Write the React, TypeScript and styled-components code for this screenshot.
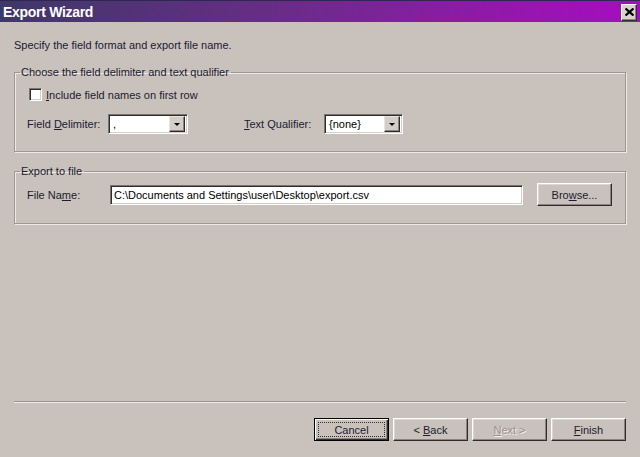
import React from "react";
import styled, { createGlobalStyle, css } from "styled-components";

const Global = createGlobalStyle`
  html, body { margin: 0; padding: 0; background: #c9c1bc; }
  body { font-family: "Liberation Sans", Arial, sans-serif; font-size: 11px; color: #201c30; }
  * { box-sizing: border-box; }
`;

const Window = styled.div`
  width: 640px;
  height: 457px;
  display: flex;
  flex-direction: column;
  background: #c9c1bc;
  overflow: hidden;
`;

const TitleBar = styled.div`
  height: 22px;
  flex: none;
  display: flex;
  align-items: center;
  justify-content: space-between;
  padding: 0 3px 0 3px;
  background: linear-gradient(to right, #3e3868 0%, #6a2c88 45%, #8e1aa8 75%, #a80cc2 100%);
  border-top: 1px solid #2e2850;
`;

const Title = styled.span`
  color: #ffffff;
  font-weight: bold;
  font-size: 14px;
  letter-spacing: -0.3px;
`;

const CloseButton = styled.div`
  width: 16px;
  height: 17px;
  margin-top: 1px;
  background: #d8d2ce;
  border: 1px solid;
  border-color: #ffffff #303030 #303030 #ffffff;
  box-shadow: inset -1px -1px 0 #8a847f;
  display: flex;
  align-items: center;
  justify-content: center;
`;

const Content = styled.div`
  flex: 1;
  display: flex;
  flex-direction: column;
  padding: 0 14px;
`;

const Intro = styled.div`
  margin-top: 16px;
  line-height: 14px;
`;

const Group = styled.fieldset<{ $top: number; $height: number }>`
  margin: ${(p) => p.$top}px 0 0 0;
  height: ${(p) => p.$height}px;
  padding: 0 13px 0 12px;
  border: 1px solid #9e9691;
  box-shadow: inset 1px 1px 0 #eee9e6, 1px 1px 0 #eee9e6;
  min-width: 0;
`;

const Legend = styled.legend`
  padding: 0 2px 0 1px;
  margin-left: -7px;
  line-height: 14px;
`;

const CheckRow = styled.label`
  display: flex;
  align-items: center;
  gap: 4px;
  margin-top: 9px;
  margin-left: 2px;
  height: 13px;
`;

const sunken = css`
  background: #ffffff;
  border: 1px solid;
  border-color: #7a7470 #ffffff #ffffff #7a7470;
  box-shadow: inset 1px 1px 0 #302c2a, inset -1px -1px 0 #d4ceca;
`;

const CheckBox = styled.span`
  ${sunken};
  width: 13px;
  height: 13px;
`;

const Row = styled.div<{ $top: number }>`
  display: flex;
  align-items: center;
  margin-top: ${(p) => p.$top}px;
`;

const Label = styled.span<{ $w: number }>`
  width: ${(p) => p.$w}px;
  flex: none;
`;

const Combo = styled.div<{ $w: number }>`
  ${sunken};
  width: ${(p) => p.$w}px;
  height: 20px;
  display: flex;
  align-items: center;
  padding: 2px 2px 2px 4px;
`;

const ComboText = styled.span`
  flex: 1;
  line-height: 14px;
  color: #000;
`;

const ArrowButton = styled.div`
  width: 16px;
  height: 16px;
  background: #d4ceca;
  border: 1px solid;
  border-color: #e8e4e1 #302c2a #302c2a #e8e4e1;
  box-shadow: inset -1px -1px 0 #8a847f;
  display: flex;
  align-items: center;
  justify-content: center;
`;

const Arrow = styled.span`
  width: 0;
  height: 0;
  border-left: 3px solid transparent;
  border-right: 3px solid transparent;
  border-top: 3px solid #000;
`;

const Spacer = styled.div<{ $w: number }>`
  width: ${(p) => p.$w}px;
  flex: none;
`;

const TextInput = styled.div`
  ${sunken};
  width: 413px;
  height: 20px;
  padding: 2px 3px;
  line-height: 14px;
  font-size: 11px;
  color: #000;
  white-space: nowrap;
`;

const Button = styled.div<{ $default?: boolean; $disabled?: boolean }>`
  width: 75px;
  height: 23px;
  display: flex;
  align-items: center;
  justify-content: center;
  background: #c9c1bc;
  border: 1px solid;
  border-color: #ffffff #302c2a #302c2a #ffffff;
  box-shadow: inset -1px -1px 0 #8a847f, inset 1px 1px 0 #ddd7d3;
  color: ${(p) => (p.$disabled ? "#9a928d" : "#201c30")};
  text-shadow: ${(p) => (p.$disabled ? "1px 1px 0 #f2eeeb" : "none")};
  position: relative;
  ${(p) =>
    p.$default &&
    css`
      border-color: #000;
      box-shadow: inset 1px 1px 0 #ffffff, inset -1px -1px 0 #302c2a, inset -2px -2px 0 #8a847f;
      &::after {
        content: "";
        position: absolute;
        inset: 3px;
        border: 1px dotted #302c2a;
      }
    `}
`;

const Footer = styled.div`
  flex: none;
  padding: 0 14px 16px 14px;
`;

const Separator = styled.div`
  height: 2px;
  border-top: 1px solid #9a928d;
  border-bottom: 1px solid #efebe8;
`;

const ButtonRow = styled.div`
  display: flex;
  justify-content: flex-end;
  gap: 4px;
  margin-top: 15px;
`;

const U = styled.u`
  text-decoration: underline;
  text-underline-offset: 1px;
`;

export default function App() {
  return (
    <>
      <Global />
      <Window>
        <TitleBar>
          <Title>Export Wizard</Title>
          <CloseButton>
            <svg width="9" height="8" viewBox="0 0 9 8">
              <path d="M0.5 0.5 L8.5 7.5 M8.5 0.5 L0.5 7.5" stroke="#000" strokeWidth="2.2" fill="none" />
            </svg>
          </CloseButton>
        </TitleBar>
        <Content>
          <Intro>Specify the field format and export file name.</Intro>
          <Group $top={13} $height={87}>
            <Legend>Choose the field delimiter and text qualifier</Legend>
            <CheckRow>
              <CheckBox />
              <span>
                <U>I</U>nclude field names on first row
              </span>
            </CheckRow>
            <Row $top={13}>
              <Label $w={81}>
                Field <U>D</U>elimiter:
              </Label>
              <Combo $w={80}>
                <ComboText>,</ComboText>
                <ArrowButton>
                  <Arrow />
                </ArrowButton>
              </Combo>
              <Spacer $w={56} />
              <Label $w={80}>
                <U>T</U>ext Qualifier:
              </Label>
              <Combo $w={79}>
                <ComboText>{"{none}"}</ComboText>
                <ArrowButton>
                  <Arrow />
                </ArrowButton>
              </Combo>
            </Row>
          </Group>
          <Group $top={12} $height={60}>
            <Legend>Export to file</Legend>
            <Row $top={5}>
              <Label $w={83}>
                File Na<U>m</U>e:
              </Label>
              <TextInput>C:\Documents and Settings\user\Desktop\export.csv</TextInput>
              <Spacer $w={14} />
              <Button>
                <span>
                  Bro<U>w</U>se...
                </span>
              </Button>
            </Row>
          </Group>
        </Content>
        <Footer>
          <Separator />
          <ButtonRow>
            <Button $default>Cancel</Button>
            <Button>
              <span>
                &lt; <U>B</U>ack
              </span>
            </Button>
            <Button $disabled>
              <span>
                <U>N</U>ext &gt;
              </span>
            </Button>
            <Button>
              <span>
                <U>F</U>inish
              </span>
            </Button>
          </ButtonRow>
        </Footer>
      </Window>
    </>
  );
}
